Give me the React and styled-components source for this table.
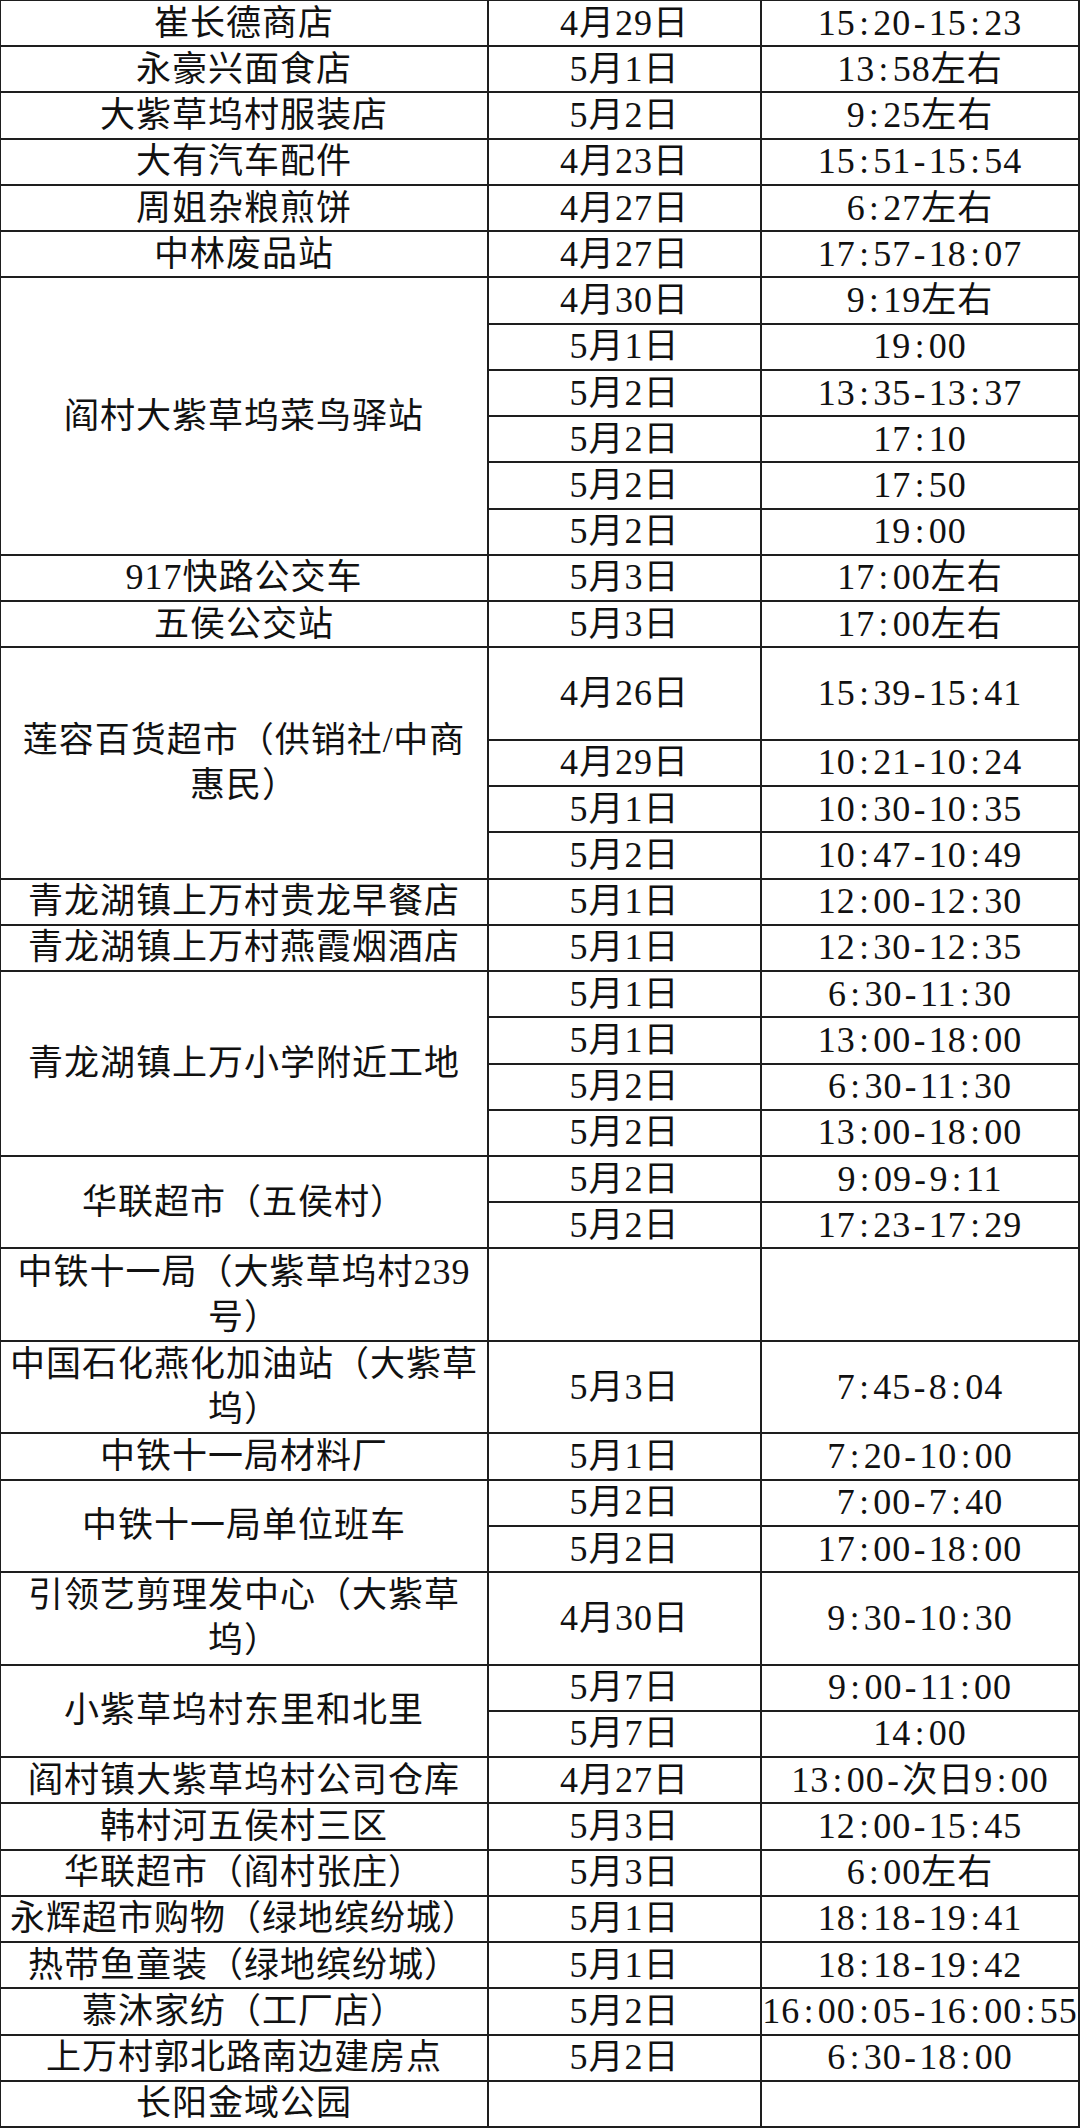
import React from "react";
import styled, { createGlobalStyle } from "styled-components";

const GlobalStyle = createGlobalStyle`
  html, body {
    margin: 0;
    padding: 0;
    background: #ffffff;
  }
  body {
    font-family: "Liberation Serif", "Noto Sans CJK SC", serif;
  }
`;

const Table = styled.div`
  display: grid;
  width: 1080px;
  height: 2128px;
  box-sizing: border-box;
  grid-template-columns: 486px 271px 316px;
  grid-template-rows: repeat(46, minmax(0, 1fr));
  gap: 2px;
  padding: 1px 2px 2px 1px;
  background: #1e1e1e;
`;

const Cell = styled.div`
  grid-column: ${(p) => p.$col};
  grid-row: ${(p) => p.$row} / span ${(p) => p.$span};
  background: #ffffff;
  display: flex;
  align-items: center;
  justify-content: center;
  text-align: center;
  color: #111111;
  font-family: "Liberation Serif", "Noto Sans CJK SC", serif;
  font-size: 35px;
  font-weight: 400;
  line-height: 45px;
  letter-spacing: 1px;
  white-space: nowrap;
  min-width: 0;
  min-height: 0;
`;

const NameCell = styled(Cell)``;

const DateCell = styled(Cell)``;

const TimeCell = styled(Cell)``;

const Num = styled.span`
  font-family: "Liberation Serif", serif;
  font-size: 36px;
`;

const Punct = styled.span`
  display: inline-block;
  width: 0.5em;
  text-align: center;
  font-family: "Liberation Serif", serif;
`;

const data = [
  { name: ["崔长德商店"], items: [["4月29日", "15:20-15:23"]] },
  { name: ["永豪兴面食店"], items: [["5月1日", "13:58左右"]] },
  { name: ["大紫草坞村服装店"], items: [["5月2日", "9:25左右"]] },
  { name: ["大有汽车配件"], items: [["4月23日", "15:51-15:54"]] },
  { name: ["周姐杂粮煎饼"], items: [["4月27日", "6:27左右"]] },
  { name: ["中林废品站"], items: [["4月27日", "17:57-18:07"]] },
  {
    name: ["阎村大紫草坞菜鸟驿站"],
    items: [
      ["4月30日", "9:19左右"],
      ["5月1日", "19:00"],
      ["5月2日", "13:35-13:37"],
      ["5月2日", "17:10"],
      ["5月2日", "17:50"],
      ["5月2日", "19:00"],
    ],
  },
  { name: ["917快路公交车"], items: [["5月3日", "17:00左右"]] },
  { name: ["五侯公交站"], items: [["5月3日", "17:00左右"]] },
  {
    name: ["莲容百货超市（供销社/中商", "惠民）"],
    items: [
      ["4月26日", "15:39-15:41", 2],
      ["4月29日", "10:21-10:24"],
      ["5月1日", "10:30-10:35"],
      ["5月2日", "10:47-10:49"],
    ],
  },
  { name: ["青龙湖镇上万村贵龙早餐店"], items: [["5月1日", "12:00-12:30"]] },
  { name: ["青龙湖镇上万村燕霞烟酒店"], items: [["5月1日", "12:30-12:35"]] },
  {
    name: ["青龙湖镇上万小学附近工地"],
    items: [
      ["5月1日", "6:30-11:30"],
      ["5月1日", "13:00-18:00"],
      ["5月2日", "6:30-11:30"],
      ["5月2日", "13:00-18:00"],
    ],
  },
  {
    name: ["华联超市（五侯村）"],
    items: [
      ["5月2日", "9:09-9:11"],
      ["5月2日", "17:23-17:29"],
    ],
  },
  { name: ["中铁十一局（大紫草坞村239", "号）"], items: [["", "", 2]] },
  { name: ["中国石化燕化加油站（大紫草", "坞）"], items: [["5月3日", "7:45-8:04", 2]] },
  { name: ["中铁十一局材料厂"], items: [["5月1日", "7:20-10:00"]] },
  {
    name: ["中铁十一局单位班车"],
    items: [
      ["5月2日", "7:00-7:40"],
      ["5月2日", "17:00-18:00"],
    ],
  },
  { name: ["引领艺剪理发中心（大紫草", "坞）"], items: [["4月30日", "9:30-10:30", 2]] },
  {
    name: ["小紫草坞村东里和北里"],
    items: [
      ["5月7日", "9:00-11:00"],
      ["5月7日", "14:00"],
    ],
  },
  { name: ["阎村镇大紫草坞村公司仓库"], items: [["4月27日", "13:00-次日9:00"]] },
  { name: ["韩村河五侯村三区"], items: [["5月3日", "12:00-15:45"]] },
  { name: ["华联超市（阎村张庄）"], items: [["5月3日", "6:00左右"]] },
  { name: ["永辉超市购物（绿地缤纷城）"], items: [["5月1日", "18:18-19:41"]] },
  { name: ["热带鱼童装（绿地缤纷城）"], items: [["5月1日", "18:18-19:42"]] },
  { name: ["慕沐家纺（工厂店）"], items: [["5月2日", "16:00:05-16:00:55"]] },
  { name: ["上万村郭北路南边建房点"], items: [["5月2日", "6:30-18:00"]] },
  { name: ["长阳金域公园"], items: [["", ""]] },
];

function Mixed({ text }) {
  const parts = text.split(/([:\-]|[0-9]+)/).filter((p) => p !== "");
  return (
    <>
      {parts.map((p, i) => {
        if (p === ":" || p === "-") return <Punct key={i}>{p}</Punct>;
        if (/^[0-9]+$/.test(p)) return <Num key={i}>{p}</Num>;
        return <React.Fragment key={i}>{p}</React.Fragment>;
      })}
    </>
  );
}

export default function App() {
  const cells = [];
  let row = 1;
  data.forEach((group, gi) => {
    const total = group.items.reduce((s, it) => s + (it[2] || 1), 0);
    cells.push(
      <NameCell key={`n${gi}`} $col={1} $row={row} $span={total}>
        <span>
          {group.name.map((line, li) => (
            <React.Fragment key={li}>
              {li > 0 && <br />}
              <Mixed text={line} />
            </React.Fragment>
          ))}
        </span>
      </NameCell>
    );
    let r = row;
    group.items.forEach((it, ii) => {
      const span = it[2] || 1;
      cells.push(
        <DateCell key={`d${gi}-${ii}`} $col={2} $row={r} $span={span}>
          <span>
            <Mixed text={it[0]} />
          </span>
        </DateCell>
      );
      cells.push(
        <TimeCell key={`t${gi}-${ii}`} $col={3} $row={r} $span={span}>
          <span>
            <Mixed text={it[1]} />
          </span>
        </TimeCell>
      );
      r += span;
    });
    row += total;
  });

  return (
    <>
      <GlobalStyle />
      <Table>{cells}</Table>
    </>
  );
}
